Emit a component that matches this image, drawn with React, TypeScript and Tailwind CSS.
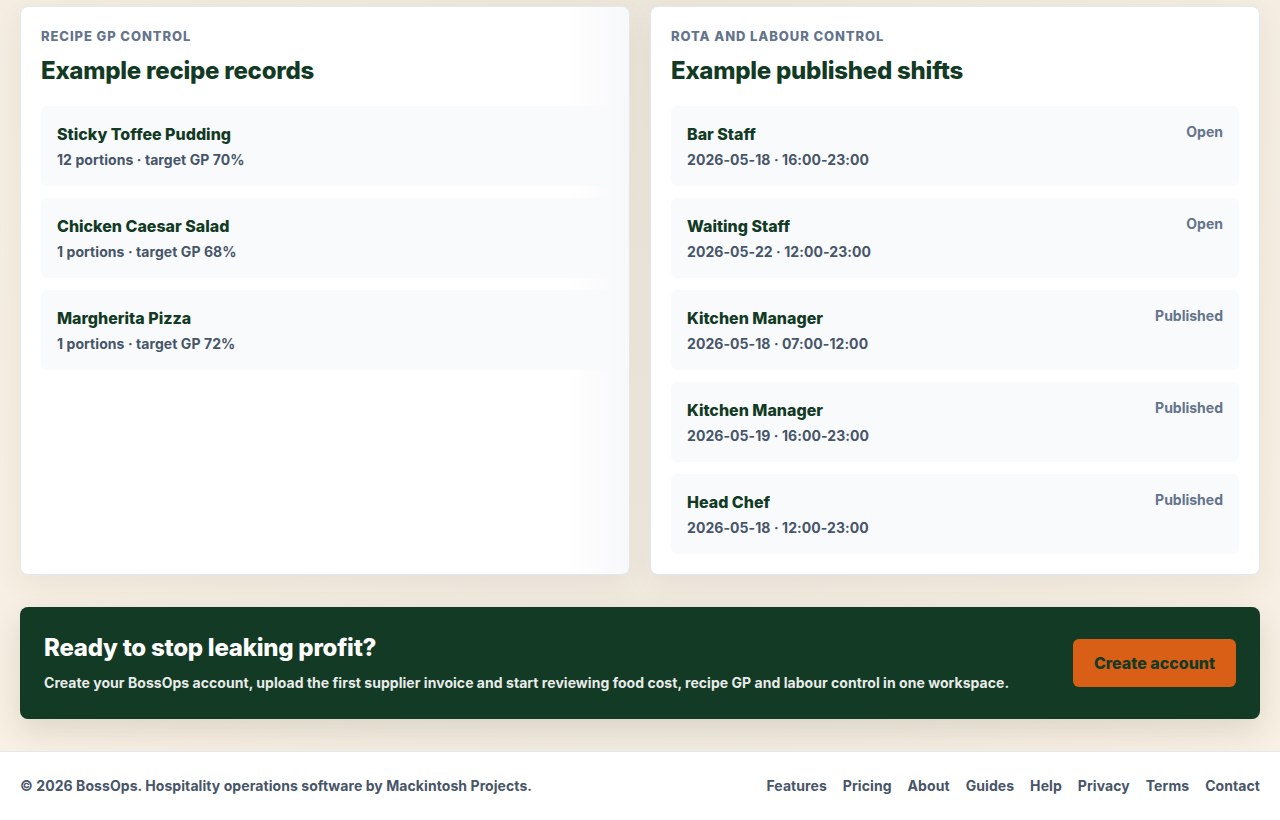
const recipes = [
  { name: "Sticky Toffee Pudding", meta: "12 portions · target GP 70%" },
  { name: "Chicken Caesar Salad", meta: "1 portions · target GP 68%" },
  { name: "Margherita Pizza", meta: "1 portions · target GP 72%" },
]

const shifts = [
  { role: "Bar Staff", when: "2026-05-18 · 16:00-23:00", status: "Open" },
  { role: "Waiting Staff", when: "2026-05-22 · 12:00-23:00", status: "Open" },
  { role: "Kitchen Manager", when: "2026-05-18 · 07:00-12:00", status: "Published" },
  { role: "Kitchen Manager", when: "2026-05-19 · 16:00-23:00", status: "Published" },
  { role: "Head Chef", when: "2026-05-18 · 12:00-23:00", status: "Published" },
]

const links = ["Features", "Pricing", "About", "Guides", "Help", "Privacy", "Terms", "Contact"]

export default function App() {
  return (
    <div className="min-h-[820px] font-['Inter',sans-serif] bg-[radial-gradient(ellipse_at_top,#ece6da_0%,#f1eadf_50%,#f9f1e4_100%)]">
      <main className="px-5 pt-[6px] pb-8">
        <div className="grid grid-cols-2 gap-5">
          <section className="rounded-lg border border-[#e2e8f0] bg-gradient-to-r from-white from-90% to-[#f7f8fa] p-5 shadow-[0_10px_30px_rgba(60,50,30,0.06)]">
            <p className="text-[13px] leading-[18px] font-extrabold uppercase tracking-[0.07em] text-[#64748b]">Recipe GP control</p>
            <h2 className="mt-[10px] text-[24px] leading-8 font-extrabold tracking-[-0.01em] text-[#133a24]">Example recipe records</h2>
            <div className="mt-[19px] flex flex-col gap-3">
              {recipes.map((r) => (
                <div key={r.name} className="rounded-md bg-[#f8fafc] p-4">
                  <div className="text-[16px] leading-6 font-extrabold text-[#133a24]">{r.name}</div>
                  <div className="mt-1 text-[14px] leading-5 font-bold tracking-[0.005em] text-[#475569]">{r.meta}</div>
                </div>
              ))}
            </div>
          </section>
          <section className="rounded-lg border border-[#e2e8f0] bg-white p-5 shadow-[0_10px_30px_rgba(60,50,30,0.06)]">
            <p className="text-[13px] leading-[18px] font-extrabold uppercase tracking-[0.07em] text-[#64748b]">Rota and labour control</p>
            <h2 className="mt-[10px] text-[24px] leading-8 font-extrabold tracking-[-0.01em] text-[#133a24]">Example published shifts</h2>
            <div className="mt-[19px] flex flex-col gap-3">
              {shifts.map((s, i) => (
                <div key={i} className="flex items-start justify-between rounded-md bg-[#f8fafc] p-4">
                  <div>
                    <div className="text-[16px] leading-6 font-extrabold text-[#133a24]">{s.role}</div>
                    <div className="mt-1 text-[14px] leading-5 font-bold tracking-[0.005em] text-[#475569]">{s.when}</div>
                  </div>
                  <span className="text-[14px] leading-5 font-bold text-[#64748b]">{s.status}</span>
                </div>
              ))}
            </div>
          </section>
        </div>

        <div className="mt-8 flex items-center justify-between rounded-lg bg-[#133a25] px-6 pt-[25px] pb-[26px] shadow-[0_12px_30px_rgba(40,40,20,0.12)]">
          <div>
            <h3 className="text-[24px] leading-8 font-extrabold tracking-[-0.01em] text-white">Ready to stop leaking profit?</h3>
            <p className="mt-[9px] text-[14px] leading-5 font-bold tracking-[0.003em] text-[#e8ece9]">
              Create your BossOps account, upload the first supplier invoice and start reviewing food cost, recipe GP and labour control in one workspace.
            </p>
          </div>
          <button className="h-12 w-[163px] rounded-md bg-[#d95f17] text-[16px] font-extrabold text-[#133a24]">Create account</button>
        </div>
      </main>

      <footer className="border-t border-[#e2e8f0] bg-white px-5 pt-6 pb-8">
        <div className="flex items-center justify-between text-[14px] leading-5 font-bold tracking-[0.005em] text-[#475569]">
          <span>© 2026 BossOps. Hospitality operations software by Mackintosh Projects.</span>
          <nav className="flex gap-4">
            {links.map((l) => (
              <a key={l} href="#">{l}</a>
            ))}
          </nav>
        </div>
      </footer>
    </div>
  )
}
